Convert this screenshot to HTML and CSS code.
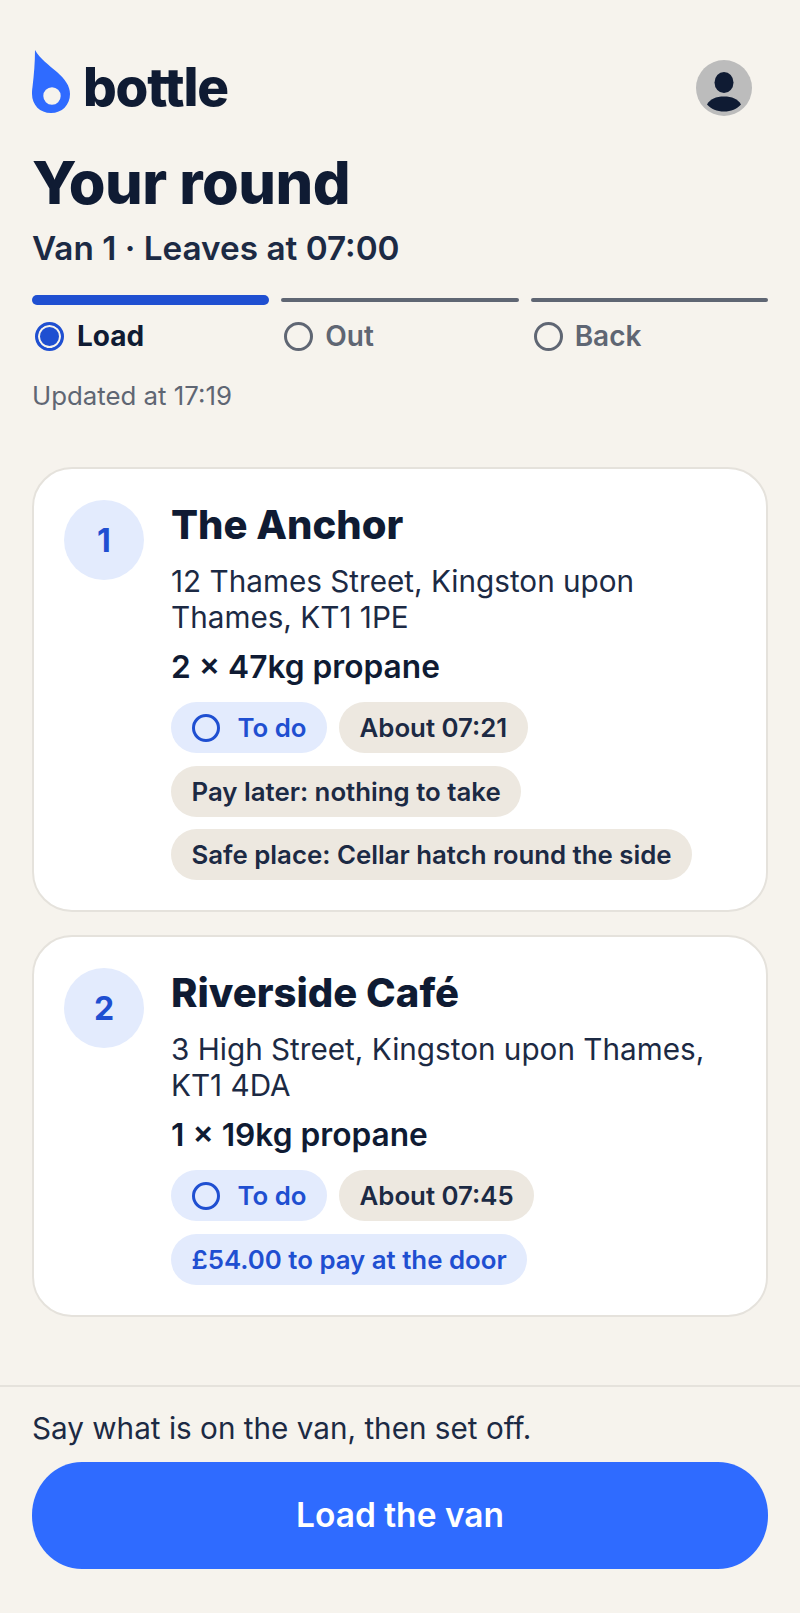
FILE: index.html
```html
<!DOCTYPE html>
<html lang="en">
<head>
<meta charset="UTF-8">
<meta name="viewport" content="width=device-width, initial-scale=1.0">
<title>Your round</title>
<link rel="stylesheet" href="styles.css">
</head>
<body>
<div class="page">
  <header class="topbar">
    <div class="brand">
      <svg class="brand-mark" viewBox="0 0 38 63" width="38" height="63">
        <path fill="#2f6bff" fill-rule="evenodd" d="M3 0C8 9 17 15 25 22C33 29 38 36 38 44C38 55 30 63 19 63C8 63 0 55 0 44C0 42 0 40 .5 37C2 25 3 12 3 0ZM20 37.300A8.700 8.700 0 1 0 20 54.700A8.700 8.700 0 1 0 20 37.300Z"/>
      </svg>
      <span class="brand-name">bottle</span>
    </div>
    <div class="avatar">
      <svg viewBox="0 0 56 56" width="56" height="56">
        <ellipse cx="28" cy="22.500" rx="9.500" ry="10.500" fill="#0f1b33"/>
        <path fill="#0f1b33" d="M11 44.500C14 39 20 36.500 28 36.500C36 36.500 42 39 45 44.500C41 49 35 51.500 28 51.500C21 51.500 15 49 11 44.500Z"/>
      </svg>
    </div>
  </header>

  <h1 class="title">Your round</h1>
  <p class="subtitle">Van 1 · Leaves at 07:00</p>

  <div class="steps">
    <div class="step step-active">
      <div class="step-bar"></div>
      <div class="step-label"><span class="step-dot"></span>Load</div>
    </div>
    <div class="step">
      <div class="step-bar"></div>
      <div class="step-label"><span class="step-dot"></span>Out</div>
    </div>
    <div class="step">
      <div class="step-bar"></div>
      <div class="step-label"><span class="step-dot"></span>Back</div>
    </div>
  </div>

  <p class="updated">Updated at 17:19</p>

  <div class="stops">
    <div class="card">
      <div class="num">1</div>
      <div class="card-body">
        <h2 class="card-title">The Anchor</h2>
        <p class="address">12 Thames Street, Kingston upon Thames, KT1 1PE</p>
        <p class="load">2 × 47kg propane</p>
        <div class="pills">
          <span class="pill pill-blue"><span class="pill-ring"></span>To do</span>
          <span class="pill">About 07:21</span>
          <span class="pill">Pay later: nothing to take</span>
          <span class="pill">Safe place: Cellar hatch round the side</span>
        </div>
      </div>
    </div>
    <div class="card">
      <div class="num">2</div>
      <div class="card-body">
        <h2 class="card-title">Riverside Café</h2>
        <p class="address">3 High Street, Kingston upon Thames, KT1 4DA</p>
        <p class="load">1 × 19kg propane</p>
        <div class="pills">
          <span class="pill pill-blue"><span class="pill-ring"></span>To do</span>
          <span class="pill">About 07:45</span>
          <span class="pill pill-blue pill-pay">£54.00 to pay at the door</span>
        </div>
      </div>
    </div>
  </div>
</div>

<footer class="footer">
  <p class="footer-note">Say what is on the van, then set off.</p>
  <button class="cta">Load the van</button>
</footer>
</body>
</html>
```

FILE: styles.css
```css
* {
  box-sizing: border-box;
}

body {
  margin: 0;
  background-color: #f6f3ed;
  color: #0f1b33;
  font-family: Inter, "Liberation Sans", sans-serif;
}

h1, h2, p {
  margin: 0;
}

.page {
  padding: 50px 32px 0;
}

.topbar {
  display: flex;
  justify-content: space-between;
  align-items: flex-start;
  height: 63px;
}

.brand {
  display: flex;
  align-items: flex-end;
  gap: 13px;
}

.brand-mark {
  display: block;
}

.brand-name {
  font-size: 53px;
  font-weight: 800;
  line-height: 58px;
  letter-spacing: -1.2px;
  transform: translateY(3px);
}

.avatar {
  width: 56px;
  height: 56px;
  margin: 10px 16px 0 0;
  border-radius: 50%;
  background-color: #bcbcbc;
}

.avatar svg {
  display: block;
}

.title {
  margin-top: 34px;
  font-size: 59.400px;
  font-weight: 800;
  line-height: 70px;
  letter-spacing: -0.5px;
}

.subtitle {
  margin-top: 9px;
  font-size: 33.300px;
  font-weight: 600;
  line-height: 44px;
  color: #1c2a44;
}

.steps {
  display: grid;
  grid-template-columns: repeat(3, 1fr);
  gap: 12px;
  margin-top: 25px;
}

.step {
  display: flex;
  flex-direction: column;
  gap: 16px;
}

.step-bar {
  height: 4px;
  margin: 3px 0;
  border-radius: 2px;
  background-color: #5f6673;
}

.step-label {
  display: flex;
  align-items: center;
  gap: 12px;
  height: 30px;
  padding-left: 3px;
  font-size: 28px;
  font-weight: 600;
  color: #5f6673;
}

.step-dot {
  width: 29px;
  height: 29px;
  border: 3px solid #5f6673;
  border-radius: 50%;
}

.step-active .step-bar {
  height: 10px;
  margin: 0;
  border-radius: 5px;
  background-color: #1f4fd1;
}

.step-active .step-label {
  gap: 13px;
  font-weight: 700;
  color: #0f1b33;
}

.step-active .step-dot {
  border-color: #1f4fd1;
  background-color: #1f4fd1;
  box-shadow: inset 0 0 0 2px #f6f3ed;
}

.updated {
  margin-top: 27px;
  font-size: 25.800px;
  line-height: 36px;
  color: #5f6673;
}

.stops {
  display: flex;
  flex-direction: column;
  gap: 23px;
  margin-top: 53px;
}

.card {
  display: flex;
  gap: 27px;
  padding: 31px 30px 30px;
  border: 2px solid #e5e2dc;
  border-radius: 40px;
  background-color: #fff;
}

.num {
  flex: none;
  display: flex;
  justify-content: center;
  align-items: center;
  width: 80px;
  height: 80px;
  border-radius: 50%;
  background-color: #e3ebfd;
  color: #1f4fd1;
  font-size: 32px;
  font-weight: 700;
}

.card-title {
  font-size: 40px;
  font-weight: 800;
  line-height: 50px;
}

.address {
  margin-top: 13px;
  font-size: 29.700px;
  line-height: 36px;
  color: #1c2a44;
}

.load {
  margin-top: 12px;
  font-size: 31.700px;
  font-weight: 600;
  line-height: 40px;
}

.pills {
  display: flex;
  flex-wrap: wrap;
  gap: 12.500px 12px;
  margin-top: 15px;
}

.pill {
  display: inline-flex;
  align-items: center;
  height: 51px;
  padding: 0 20.500px;
  border-radius: 26px;
  background-color: #ede8e0;
  color: #1c2a44;
  font-size: 25.800px;
  font-weight: 600;
}

.pill-blue {
  background-color: #e3ebfd;
  color: #1f4fd1;
}

.pill-ring {
  width: 28px;
  height: 28px;
  margin-right: 18px;
  border: 3px solid #1f4fd1;
  border-radius: 50%;
}

.footer {
  margin-top: 68px;
  padding: 23px 32px 46px;
  border-top: 2px solid #e5e2dc;
}

.footer-note {
  font-size: 29.700px;
  line-height: 36px;
  color: #1c2a44;
}

.cta {
  display: block;
  width: 100%;
  height: 107px;
  margin-top: 16px;
  border: none;
  border-radius: 50px / 53px;
  background-color: #2f6bff;
  color: #fff;
  font-family: inherit;
  font-size: 33.500px;
  font-weight: 600;
}
```
